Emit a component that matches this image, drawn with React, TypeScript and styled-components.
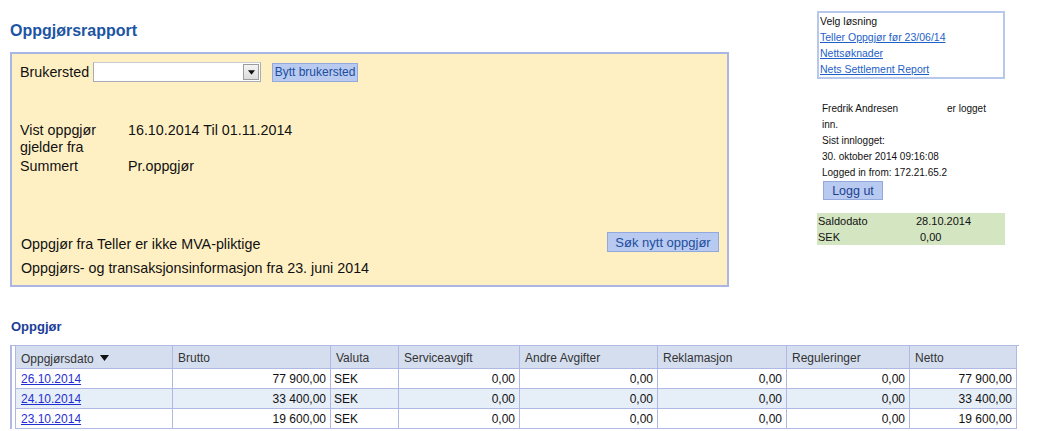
import styled, { createGlobalStyle } from "styled-components";

const GlobalStyle = createGlobalStyle`
  body {
    margin: 0;
    background: #fff;
    font-family: "Liberation Sans", Arial, sans-serif;
    color: #111;
  }
`;

type Settlement = { date: string; brutto: string; netto: string };

const settlements: Settlement[] = [
  { date: "26.10.2014", brutto: "77 900,00", netto: "77 900,00" },
  { date: "24.10.2014", brutto: "33 400,00", netto: "33 400,00" },
  { date: "23.10.2014", brutto: "19 600,00", netto: "19 600,00" },
];

const columns = [
  { title: "Oppgjørsdato", width: 157 },
  { title: "Brutto", width: 158 },
  { title: "Valuta", width: 68 },
  { title: "Serviceavgift", width: 121 },
  { title: "Andre Avgifter", width: 138 },
  { title: "Reklamasjon", width: 129 },
  { title: "Reguleringer", width: 123 },
  { title: "Netto", width: 107 },
];

//sorteringspil i tabellhodet
const SortArrow = () => (
  <svg width="9" height="6" viewBox="0 0 9 6">
    <path d="M0 0 H9 L4.5 6 Z" fill="#111" />
  </svg>
);

const App = () => {
  return (
    <>
      <GlobalStyle />
      <TopRow>
        <MainColumn>
          <PageTitle>Oppgjørsrapport</PageTitle>
          <FilterPanel>
            <SiteRow>
              <PanelText>Brukersted</PanelText>
              <FakeSelect>
                <SelectArrow>
                  <SortArrow />
                </SelectArrow>
              </FakeSelect>
              <SmallButton>Bytt brukersted</SmallButton>
            </SiteRow>
            <InfoGrid>
              <span>
                Vist oppgjør
                <br />
                gjelder fra
              </span>
              <span>16.10.2014 Til 01.11.2014</span>
              <span>Summert</span>
              <span>Pr.oppgjør</span>
            </InfoGrid>
            <PanelFooter>
              <FooterRow>
                <span>Oppgjør fra Teller er ikke MVA-pliktige</span>
                <SearchButton>Søk nytt oppgjør</SearchButton>
              </FooterRow>
              <FooterLine>Oppgjørs- og transaksjonsinformasjon fra 23. juni 2014</FooterLine>
            </PanelFooter>
          </FilterPanel>
        </MainColumn>

        <SideColumn>
          <SolutionBox>
            <div>Velg løsning</div>
            <SideLink href="#">Teller Oppgjør før 23/06/14</SideLink>
            <SideLink href="#">Nettsøknader</SideLink>
            <SideLink href="#">Nets Settlement Report</SideLink>
          </SolutionBox>
          <LoginBlock>
            <NameLine>
              <UserName>Fredrik Andresen</UserName>
              <span>er logget</span>
            </NameLine>
            <div>inn.</div>
            <div>Sist innlogget:</div>
            <div>30. oktober 2014 09:16:08</div>
            <div>Logged in from: 172.21.65.2</div>
            <LogoutButton>Logg ut</LogoutButton>
          </LoginBlock>
          <BalanceBox>
            <span>Saldodato</span>
            <span>28.10.2014</span>
            <span>SEK</span>
            <BalanceAmount>0,00</BalanceAmount>
          </BalanceBox>
        </SideColumn>
      </TopRow>

      <SectionTitle>Oppgjør</SectionTitle>
      <TableFrame>
        <ReportTable>
          <colgroup>
            {columns.map((c) => (
              <col key={c.title} style={{ width: c.width }} />
            ))}
          </colgroup>
          <thead>
            <tr>
              {columns.map((c, i) => (
                <HeadCell key={c.title}>
                  {c.title}
                  {i === 0 && (
                    <ArrowWrap>
                      <SortArrow />
                    </ArrowWrap>
                  )}
                </HeadCell>
              ))}
            </tr>
          </thead>
          <tbody>
            {settlements.map((s, i) => (
              <BodyRow key={s.date} $alt={i % 2 === 1}>
                <Cell>
                  <DateLink href="#">{s.date}</DateLink>
                </Cell>
                <Cell $right>{s.brutto}</Cell>
                <Cell $currency>SEK</Cell>
                <Cell $right>0,00</Cell>
                <Cell $right>0,00</Cell>
                <Cell $right>0,00</Cell>
                <Cell $right>0,00</Cell>
                <Cell $right>{s.netto}</Cell>
              </BodyRow>
            ))}
          </tbody>
        </ReportTable>
      </TableFrame>
    </>
  );
};
export default App;

const TopRow = styled.div`
  display: flex;
  align-items: flex-start;
  padding: 11px 0 0 10px;
`;
const MainColumn = styled.div`
  width: 719px;
  flex-shrink: 0;
`;
const PageTitle = styled.h1`
  margin: 10px 0 11px;
  font-size: 16px;
  line-height: 20px;
  font-weight: 700;
  color: #1c55a3;
`;
const FilterPanel = styled.div`
  box-sizing: border-box;
  height: 235px;
  display: flex;
  flex-direction: column;
  padding: 8px 8px 8px;
  background: #fff0c4;
  border: 2px solid #a9b5e2;
  font-size: 14.3px;
  color: #111;
`;
const SiteRow = styled.div`
  display: flex;
  align-items: center;
  height: 20px;
`;
const PanelText = styled.span`
  width: 73px;
  flex-shrink: 0;
`;
const FakeSelect = styled.div`
  box-sizing: border-box;
  width: 168px;
  height: 20px;
  display: flex;
  justify-content: flex-end;
  align-items: center;
  background: #fff;
  border: 1px solid #a5acb5;
  border-top-color: #c8ccd2;
  padding-right: 1px;
`;
const SelectArrow = styled.div`
  box-sizing: border-box;
  width: 16px;
  height: 16px;
  display: flex;
  align-items: center;
  justify-content: center;
  background: linear-gradient(#f4f4f4, #dcdcdc);
  border: 1px solid #9c9c9c;
  svg {
    width: 7px;
    height: 5px;
  }
`;
const SmallButton = styled.button`
  box-sizing: border-box;
  width: 86px;
  height: 19px;
  margin-left: 11px;
  padding: 0;
  font-family: inherit;
  font-size: 12px;
  color: #1d4e9e;
  background: #b8caf0;
  border: 1px solid #93a9dd;
`;
const InfoGrid = styled.div`
  display: grid;
  grid-template-columns: 108px auto;
  row-gap: 2px;
  margin-top: 40px;
  line-height: 17px;
`;
const PanelFooter = styled.div`
  margin-top: auto;
  padding-left: 1px;
`;
const FooterRow = styled.div`
  display: flex;
  justify-content: space-between;
  align-items: center;
  height: 20px;
  span {
    padding-top: 4px;
  }
`;
const SearchButton = styled.button`
  box-sizing: border-box;
  width: 112px;
  height: 20px;
  padding: 0;
  font-family: inherit;
  font-size: 13px;
  color: #1d4e9e;
  background: #b8caf0;
  border: 1px solid #93a9dd;
`;
const FooterLine = styled.div`
  margin-top: 8px;
  line-height: 17px;
`;

const SideColumn = styled.div`
  width: 188px;
  margin-left: 88px;
  flex-shrink: 0;
`;
const SolutionBox = styled.div`
  display: flex;
  flex-direction: column;
  padding-left: 1px;
  border: 2px solid #b8c7ec;
  font-size: 10.5px;
  line-height: 16px;
  color: #111;
`;
const SideLink = styled.a`
  color: #1e5fc8;
  text-decoration: underline;
  align-self: flex-start;
`;
const LoginBlock = styled.div`
  margin-top: 22px;
  padding-left: 5px;
  font-size: 10px;
  line-height: 16px;
  color: #111;
`;
const NameLine = styled.div`
  display: flex;
`;
const UserName = styled.span`
  width: 125px;
`;
const LogoutButton = styled.button`
  box-sizing: border-box;
  display: block;
  width: 60px;
  height: 19px;
  margin: 0 0 0 1px;
  padding: 0;
  font-family: inherit;
  font-size: 12.5px;
  color: #1b3f8f;
  background: #b8caf0;
  border: 1px solid #93a9dd;
`;
const BalanceBox = styled.div`
  display: grid;
  grid-template-columns: 98px 1fr;
  margin-top: 13px;
  padding-left: 1px;
  background: #d3e5c1;
  font-size: 11px;
  line-height: 16px;
  color: #111;
`;
const BalanceAmount = styled.span`
  padding-left: 4px;
`;

const SectionTitle = styled.h2`
  margin: 31px 0 0 11px;
  font-size: 13px;
  line-height: 17px;
  font-weight: 700;
  color: #1c3e98;
`;
const TableFrame = styled.div`
  width: 1004px;
  margin: 10px 0 0 10px;
  padding-left: 3px;
  border-left: 2px solid #b0b9e4;
  border-top: 1px solid #b0b9e4;
`;
const ReportTable = styled.table`
  width: 1001px;
  table-layout: fixed;
  border-collapse: collapse;
  font-size: 12px;
`;
const HeadCell = styled.th`
  height: 21px;
  padding: 1px 5px 0;
  text-align: left;
  font-weight: 400;
  color: #333;
  background: #d5deef;
  border: 1px solid #b0b9e4;
  border-top: 0;
`;
const ArrowWrap = styled.span`
  display: inline-block;
  margin-left: 6px;
  vertical-align: 2px;
`;
const BodyRow = styled.tr<{ $alt?: boolean }>`
  background: ${(p) => (p.$alt ? "#e6eef7" : "#fff")};
`;
const Cell = styled.td<{ $right?: boolean; $currency?: boolean }>`
  height: 19px;
  padding: ${(p) => (p.$currency ? "0 3px" : "0 4px 0 5px")};
  text-align: ${(p) => (p.$right ? "right" : "left")};
  color: #111;
  border: 1px solid #b0b9e4;
  white-space: nowrap;
`;
const DateLink = styled.a`
  color: #1f2fd2;
  text-decoration: underline;
`;
